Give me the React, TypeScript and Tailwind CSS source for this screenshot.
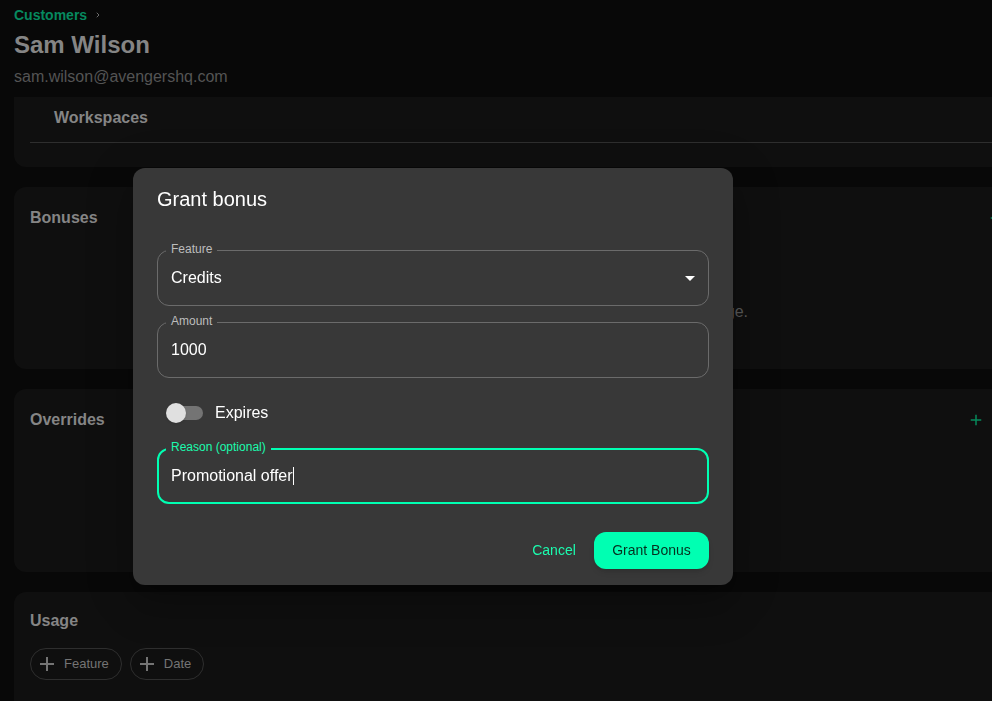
import { ReactNode, useState } from "react";
import { ChevronRight } from "lucide-react";

function PlusIcon({ className }: { className: string }) {
  return (
    <svg viewBox="0 0 24 24" fill="currentColor" aria-hidden="true" className={className}>
      <path d="M19 13h-6v6h-2v-6H5v-2h6V5h2v6h6z" />
    </svg>
  );
}

function Card({ title, action, className = "", children }: {
  title: string;
  action?: ReactNode;
  className?: string;
  children?: ReactNode;
}) {
  return (
    <section className={`rounded-l-xl bg-[#0f0f0f] pl-4 ${className}`}>
      <div className="flex h-[30px] items-center justify-between pr-[7px]">
        <h2 className="text-base font-bold text-[#858585]">{title}</h2>
        {action}
      </div>
      {children}
    </section>
  );
}

function FilterChip({ label }: { label: string }) {
  return (
    <button
      type="button"
      className="flex h-8 items-center gap-[5px] rounded-full border border-[#2e2e2e] pr-3 pl-1 text-[13px] text-[#747474]"
    >
      <PlusIcon className="size-6" />
      {label}
    </button>
  );
}

// outlined field, the label sits in a notch of the border
function Field({ id, label, active = false, children }: {
  id: string;
  label: string;
  active?: boolean;
  children: ReactNode;
}) {
  return (
    <div
      className={`relative flex h-14 items-center rounded-xl ${
        active ? "border-2 border-[#00ffb2] px-3" : "border border-[#6b6b6b] px-[13px]"
      }`}
    >
      <label
        htmlFor={id}
        className={`absolute bg-[#383838] px-[5px] text-xs ${
          active ? "-top-[11px] left-[7px] text-[#1bfbae]" : "-top-2.5 left-2 text-[#bdbdbd]"
        }`}
      >
        {label}
      </label>
      {children}
    </div>
  );
}

function CustomerPage() {
  return (
    <div className="flex min-h-screen flex-col overflow-hidden bg-[#080808] pl-3.5">
      <header className="pt-[3px]">
        <nav className="flex h-6 items-center gap-[7px] text-sm font-bold text-[#06895f]">
          <a href="#customers">Customers</a>
          <ChevronRight className="size-2 text-[#6c6c6c]" strokeWidth={3} />
        </nav>
        <h1 className="text-2xl leading-9 font-bold text-[#858585]">Sam Wilson</h1>
        <p className="text-base leading-7 text-[#545454]">sam.wilson@avengershq.com</p>
      </header>

      <main className="mt-1.5 flex grow flex-col gap-5">
        <section className="h-[70px] rounded-bl-xl bg-[#0f0f0f] pl-4">
          <div className="flex h-[46px] items-start border-b border-[#2e2e2e] pt-[9px] pl-6">
            <h2 className="text-base font-bold text-[#858585]">Workspaces</h2>
          </div>
        </section>

        <Card
          title="Bonuses"
          className="h-[182px] pt-4"
          action={
            <button type="button" aria-label="Add bonus" className="-mr-5 text-[#078a5c]">
              <PlusIcon className="size-[18px]" />
            </button>
          }
        >
          <p className="mt-[67px] pr-[244px] text-right text-base text-[#5a5a5a]">ge.</p>
        </Card>

        <Card
          title="Overrides"
          className="h-[183px] pt-4"
          action={
            <button type="button" aria-label="Add override" className="text-[#078a5c]">
              <PlusIcon className="size-[18px]" />
            </button>
          }
        />

        <Card title="Usage" className="grow rounded-b-none pt-3.5 pb-4">
          <div className="mt-3 flex gap-2">
            <FilterChip label="Feature" />
            <FilterChip label="Date" />
          </div>
        </Card>
      </main>
    </div>
  );
}

function GrantBonusDialog() {
  const [amount, setAmount] = useState("1000");
  const [expires, setExpires] = useState(false);
  const [reason, setReason] = useState("Promotional offer");

  return (
    <div className="fixed inset-0 flex items-start overflow-hidden pt-42 pl-[133px]">
      <form
        role="dialog"
        aria-labelledby="grant-title"
        onSubmit={(e) => e.preventDefault()}
        className="w-full max-w-[600px] rounded-xl bg-[#383838] px-6 py-4 text-white shadow-[0_11px_15px_-7px_rgba(0,0,0,0.2),0_24px_38px_3px_rgba(0,0,0,0.14),0_9px_46px_8px_rgba(0,0,0,0.12)]"
      >
        <h2 id="grant-title" className="text-xl leading-[30px]">Grant bonus</h2>

        <div className="mt-9 flex flex-col gap-4">
          <Field id="feature" label="Feature">
            <select id="feature" className="w-full appearance-none bg-transparent text-base outline-none">
              <option>Credits</option>
            </select>
            <svg
              viewBox="0 0 24 24"
              fill="currentColor"
              aria-hidden="true"
              className="pointer-events-none absolute right-1.5 size-6"
            >
              <path d="M7 10l5 5 5-5z" />
            </svg>
          </Field>

          <Field id="amount" label="Amount">
            <input
              id="amount"
              value={amount}
              onChange={(e) => setAmount(e.target.value)}
              className="w-full bg-transparent text-base outline-none"
            />
          </Field>

          <label className="flex h-[38px] items-center gap-3 pl-3 text-base">
            <input
              type="checkbox"
              role="switch"
              checked={expires}
              onChange={(e) => setExpires(e.target.checked)}
              className="relative h-3.5 w-[34px] appearance-none rounded-full bg-[#747474] before:absolute before:-top-[3px] before:-left-[3px] before:size-5 before:rounded-full before:bg-[#e0e0e0] before:shadow-sm checked:before:left-[17px]"
            />
            Expires
          </label>

          <Field id="reason" label="Reason (optional)" active>
            <input
              id="reason"
              value={reason}
              onChange={(e) => setReason(e.target.value)}
              className="bg-transparent text-base caret-transparent outline-none [field-sizing:content]"
            />
            <span className="h-[18px] w-px bg-white" />
          </Field>
        </div>

        <div className="mt-7 flex h-[37px] justify-end gap-2 text-sm">
          <button type="button" className="min-w-16 rounded-xl px-2 pb-0.5 text-[#1bfbae]">Cancel</button>
          <button
            type="submit"
            className="min-w-[115px] rounded-xl bg-[#00ffb2] px-4 pb-0.5 text-[#06301f] shadow-md"
          >
            Grant Bonus
          </button>
        </div>
      </form>
    </div>
  );
}

export default function App() {
  return (
    <div className="font-['Liberation_Sans',Arial,sans-serif]">
      <CustomerPage />
      <GrantBonusDialog />
    </div>
  );
}
